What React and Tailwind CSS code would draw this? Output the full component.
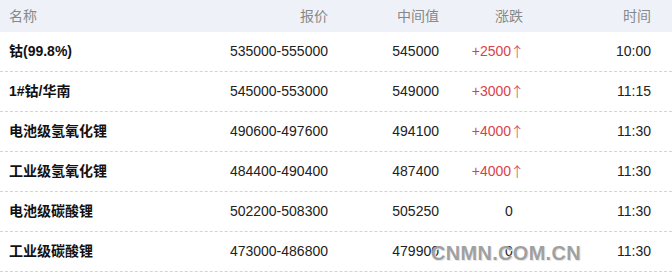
const rows = [
  { name: '钴(99.8%)', price: '535000-555000', mid: '545000', change: '+2500', up: true, time: '10:00' },
  { name: '1#钴/华南', price: '545000-553000', mid: '549000', change: '+3000', up: true, time: '11:15' },
  { name: '电池级氢氧化锂', price: '490600-497600', mid: '494100', change: '+4000', up: true, time: '11:30' },
  { name: '工业级氢氧化锂', price: '484400-490400', mid: '487400', change: '+4000', up: true, time: '11:30' },
  { name: '电池级碳酸锂', price: '502200-508300', mid: '505250', change: '0', up: false, time: '11:30' },
  { name: '工业级碳酸锂', price: '473000-486800', mid: '479900', change: '0', up: false, time: '11:30' },
];

const cols = 'grid grid-cols-[219px_100px_111px_140px_72px] pl-[9px] pr-[21px]';

export default function App() {
  return (
    <div
      className="relative w-[672px] h-[277px] bg-white text-[14px] text-[#222]"
      style={{ fontFamily: '"Liberation Sans", "Noto Sans CJK SC", sans-serif' }}
    >
      {/* header */}
      <div className={`${cols} h-[32px] items-center bg-[#eef2f8] text-[#888]`}>
        <div>名称</div>
        <div className="text-right">报价</div>
        <div className="text-right">中间值</div>
        <div className="text-center">涨跌</div>
        <div className="text-right">时间</div>
      </div>

      {rows.map((r, i) => (
        <div
          key={i}
          className={`${cols} h-[40px] items-center border-b border-dashed border-[#d4d4d4]`}
        >
          <div className="font-bold text-[#111]">{r.name}</div>
          <div className="text-right">{r.price}</div>
          <div className="text-right">{r.mid}</div>
          <div className="text-center">
            {r.up ? (
              <span className="inline-flex mr-[22px] text-[#d9424a]">
                <span>{r.change}</span>
                <span className="-ml-[1px] font-['Noto_Sans_CJK_SC'] font-light">↑</span>
              </span>
            ) : (
              <span>{r.change}</span>
            )}
          </div>
          <div className="text-right">{r.time}</div>
        </div>
      ))}

      {/* watermark */}
      <div
        className="absolute left-[431px] top-[238px] text-[20px] font-bold tracking-[0.3px] text-[#a0a0a0]"
        style={{ fontFamily: '"Liberation Sans", sans-serif', textShadow: '1px 1px 0 #e6e6e6' }}
      >
        CNMN.COM.CN
      </div>
    </div>
  );
}
